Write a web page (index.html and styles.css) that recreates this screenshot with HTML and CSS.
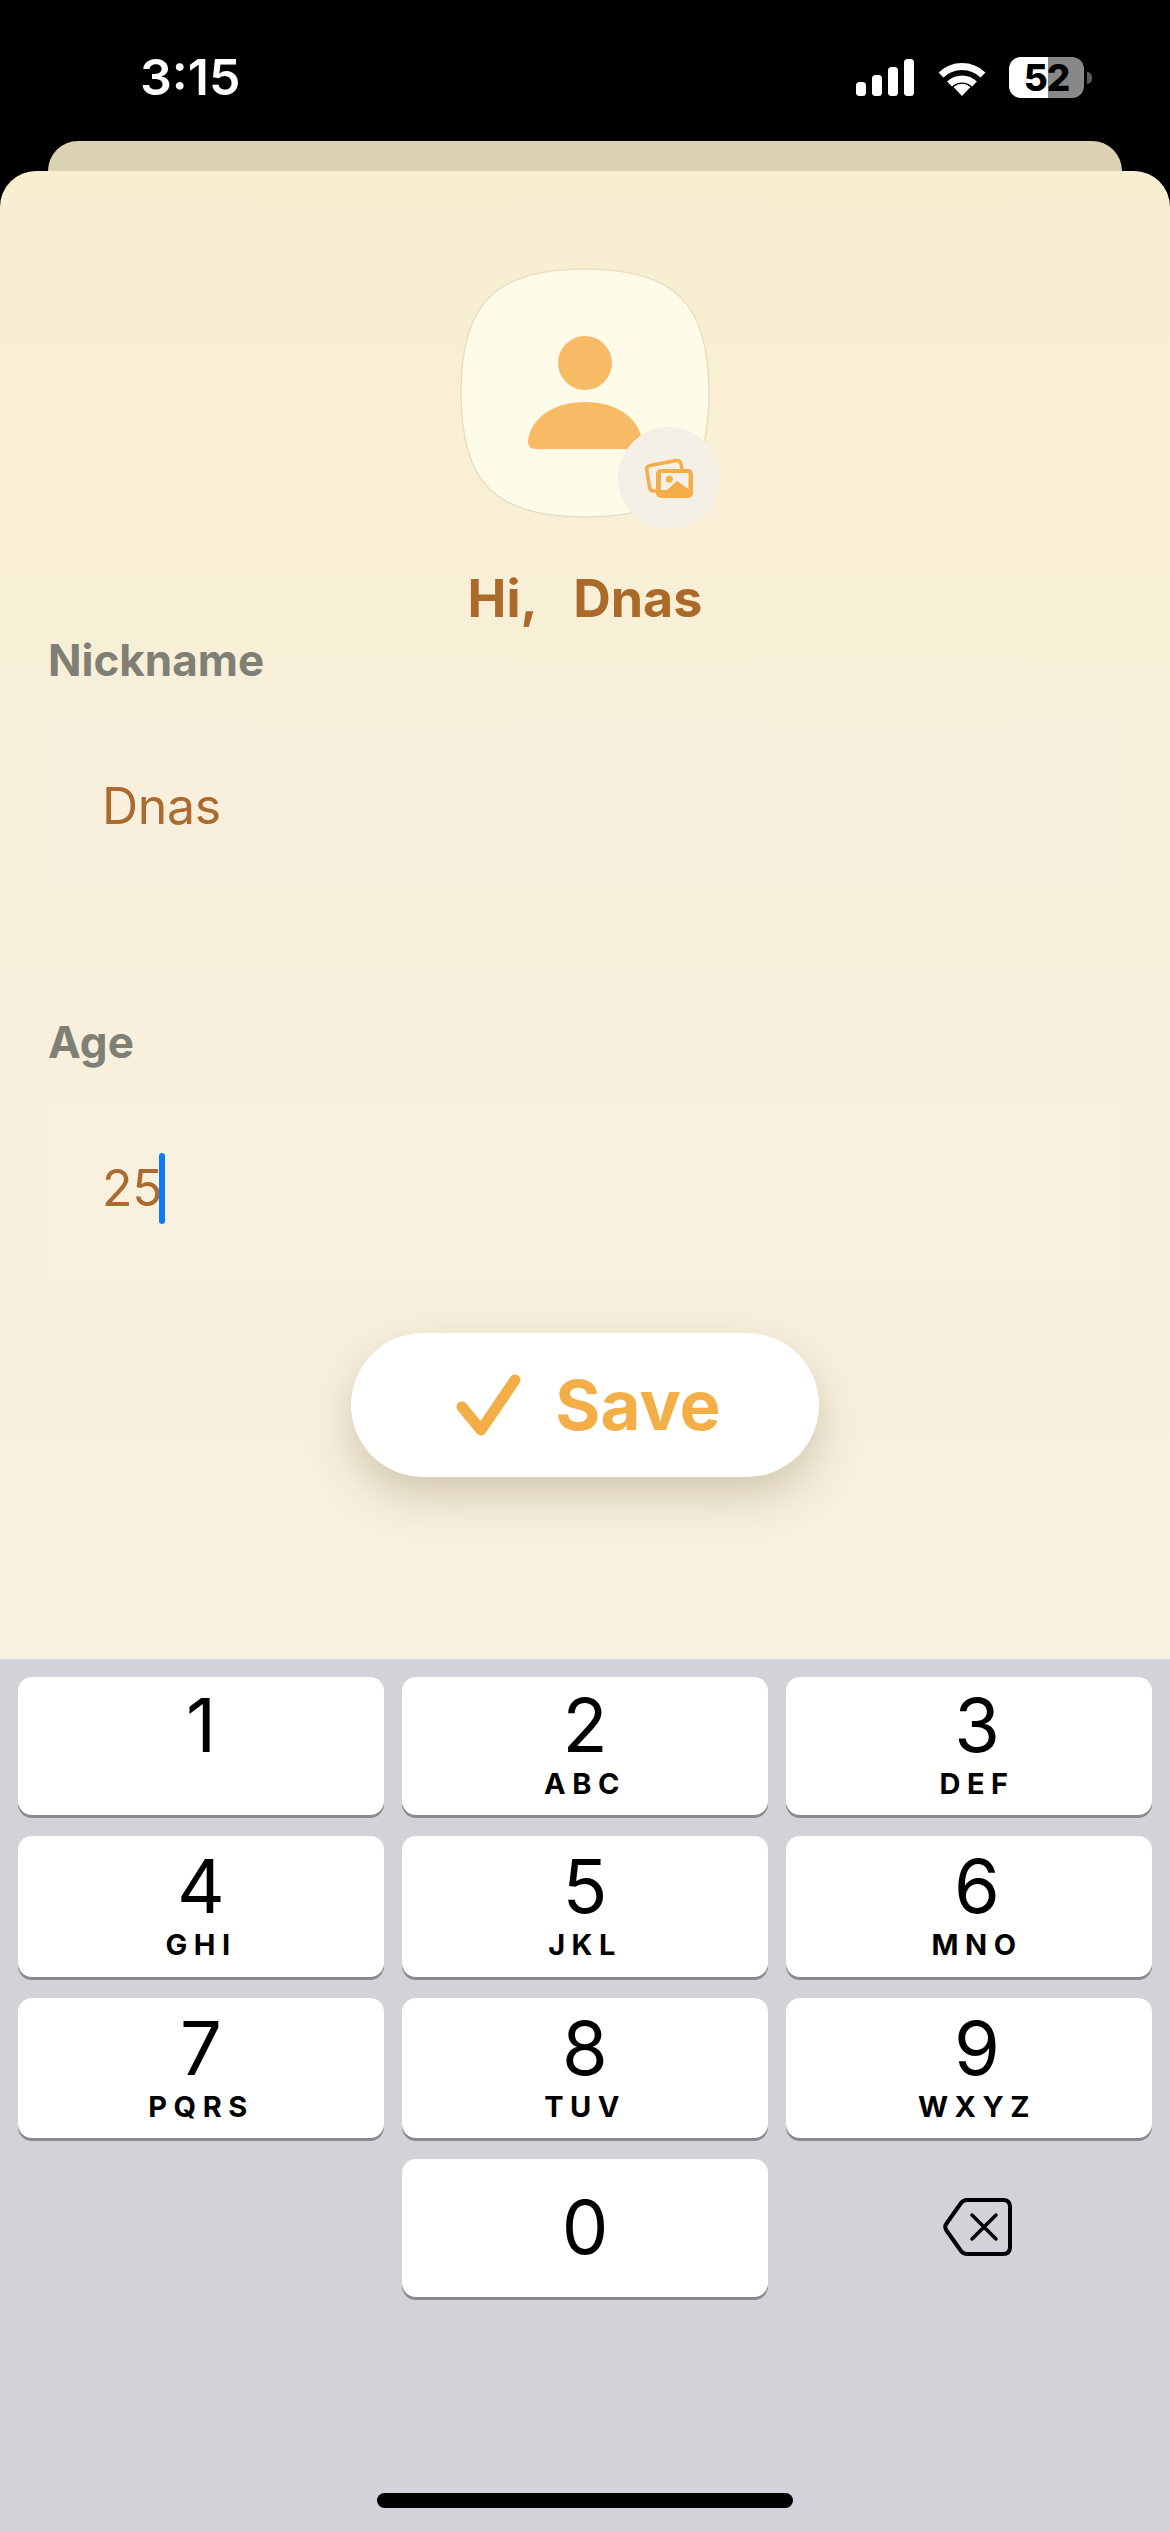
FILE: index.html
```html
<!DOCTYPE html>
<html lang="en">
<head>
  <meta charset="UTF-8">
  <title>Edit Profile</title>
  <link rel="stylesheet" href="styles.css">
</head>
<body>
  <div class="phone">
    <div class="status">
      <span class="time">3:15</span>
      <div class="status-icons">
        <svg class="signal" width="58" height="37" viewBox="0 0 58 37">
          <rect x="0" y="23" width="10" height="14" rx="3.5"/>
          <rect x="16" y="16" width="10" height="21" rx="3.5"/>
          <rect x="32" y="8" width="10" height="29" rx="3.5"/>
          <rect x="48" y="0" width="10" height="37" rx="3.5"/>
        </svg>
        <svg class="wifi" width="50" height="37" viewBox="0 0 50 37">
          <path d="M4 16 A30 30 0 0 1 46 16" fill="none" stroke="#fff" stroke-width="7"/>
          <path d="M12.5 25 A18 18 0 0 1 37.5 25" fill="none" stroke="#fff" stroke-width="7"/>
          <path d="M25 37 L16.5 28 Q25 21.5 33.5 28 Z" fill="#fff"/>
        </svg>
        <div class="battery"><span>52</span></div>
        <div class="battery-nub"></div>
      </div>
    </div>

    <div class="sheet-back"></div>

    <div class="sheet">
      <div class="avatar">
        <svg width="250" height="250" viewBox="0 0 250 250">
          <path d="M125 1 C215 1 249 35 249 125 C249 215 215 249 125 249 C35 249 1 215 1 125 C1 35 35 1 125 1 Z" fill="#fefbe8" stroke="#e9dfc0" stroke-width="1.5"/>
          <circle cx="125" cy="95" r="27" fill="#f7bb66"/>
          <path d="M68 172 C72 148 96 134 125 134 C154 134 178 148 182 172 Q183 181 174 181 H76 Q67 181 68 172 Z" fill="#f7bb66"/>
        </svg>
        <div class="badge">
          <svg width="48" height="41" viewBox="0 0 48 41">
            <path d="M11 33 H9 Q5 33 4.5 29 L1.8 12 Q1.2 8 5 7.5 L31 2.5 Q35 2 36 6 L37 11" fill="none" stroke="#f3ae48" stroke-width="3.5" stroke-linejoin="round"/>
            <rect x="11" y="11" width="37" height="29" rx="5" fill="#f3ae48"/>
            <path d="M16 15 H43.5 V32 H16 Z" fill="#f4f0e6"/>
            <path d="M21 33 L32 23 L43.5 31 V33 Z" fill="#f3ae48"/>
            <circle cx="24.3" cy="21.3" r="3.5" fill="#f3ae48"/>
          </svg>
        </div>
      </div>

      <h1 class="greeting">Hi,   Dnas</h1>

      <label class="field-label">Nickname</label>
      <div class="field field-name">Dnas</div>

      <label class="field-label age-label">Age</label>
      <div class="field field-age">25<span class="caret"></span></div>

      <button class="save-btn">
        <svg width="65" height="62" viewBox="0 0 65 62">
          <path d="M6 33 L25 56 L59 6" fill="none" stroke="#f3ae48" stroke-width="11" stroke-linecap="round" stroke-linejoin="round"/>
        </svg>
        <span>Save</span>
      </button>
    </div>

    <div class="keyboard">
      <div class="keys">
        <div class="key"><span class="num">1</span></div>
        <div class="key"><span class="num">2</span><span class="letters">ABC</span></div>
        <div class="key"><span class="num">3</span><span class="letters">DEF</span></div>
        <div class="key"><span class="num">4</span><span class="letters">GHI</span></div>
        <div class="key"><span class="num">5</span><span class="letters">JKL</span></div>
        <div class="key"><span class="num">6</span><span class="letters">MNO</span></div>
        <div class="key"><span class="num">7</span><span class="letters">PQRS</span></div>
        <div class="key"><span class="num">8</span><span class="letters">TUV</span></div>
        <div class="key"><span class="num">9</span><span class="letters">WXYZ</span></div>
        <div class="key-blank"></div>
        <div class="key key-zero"><span class="num">0</span></div>
        <div class="key-delete">
          <svg width="69" height="58" viewBox="0 0 69 58">
            <path d="M3.5 25.5 L18 5 Q20.5 2 24 2 H60 Q67 2 67 9 V49 Q67 56 60 56 H24 Q20.5 56 18 53 L3.5 32.5 Q1 29 3.5 25.5 Z" fill="none" stroke="#000" stroke-width="4"/>
            <path d="M29 17 L53 41 M53 17 L29 41" fill="none" stroke="#000" stroke-width="3.5" stroke-linecap="round"/>
          </svg>
        </div>
      </div>
      <div class="home-bar"></div>
    </div>
  </div>
</body>
</html>
```

FILE: styles.css
```css
* {
  box-sizing: border-box;
}
body {
  margin: 0;
  font-family: Inter, "Liberation Sans", sans-serif;
}
.phone {
  width: 1170px;
  height: 2532px;
  display: flex;
  flex-direction: column;
  background-color: #000;
  overflow: hidden;
}

/* status bar */
.status {
  height: 141px;
  padding: 47px 78px 0 140px;
  display: flex;
  justify-content: space-between;
  align-items: flex-start;
  color: #fff;
}
.time {
  font-size: 50px;
  font-weight: 600;
  line-height: 60px;
}
.status-icons {
  display: flex;
  align-items: center;
  margin-top: 10px;
}
.signal {
  fill: #fff;
}
.wifi {
  margin-left: 23px;
}
.battery {
  width: 75px;
  height: 41px;
  margin-left: 22px;
  border-radius: 12px;
  background: linear-gradient(90deg, #fff 52%, #888 52%);
  color: #000;
  font-size: 37px;
  font-weight: 800;
  line-height: 41px;
  letter-spacing: -1px;
  text-align: center;
}
.battery-nub {
  width: 5px;
  height: 12px;
  margin-left: 3px;
  border-radius: 0 6px 6px 0;
  background-color: #5a5a5a;
}

/* sheets */
.sheet-back {
  height: 30px;
  margin: 0 48px;
  border-radius: 30px 30px 0 0;
  background-color: #dbd2b4;
}
.sheet {
  height: 1488px;
  padding: 97px 48px 0;
  display: flex;
  flex-direction: column;
  border-radius: 36px 36px 0 0;
  background: linear-gradient(180deg, #f8efd1 0%, #f8efdb 50%, #f8f0e1 100%);
}

/* avatar */
.avatar {
  position: relative;
  width: 250px;
  height: 250px;
  align-self: center;
}
.badge {
  position: absolute;
  left: 158px;
  top: 159px;
  width: 102px;
  height: 102px;
  display: flex;
  align-items: center;
  justify-content: center;
  border-radius: 50%;
  background-color: #f4f0e6;
}
.greeting {
  margin: 51px 0 0;
  color: #ab6a2a;
  font-size: 52px;
  font-weight: 700;
  line-height: 60px;
  text-align: center;
  white-space: pre;
}

/* form */
.field-label {
  display: block;
  margin-top: 5px;
  color: #7f7f76;
  font-size: 44px;
  font-weight: 700;
  line-height: 52px;
}
.age-label {
  margin-top: 128px;
}
.field {
  padding-left: 54px;
  color: #ab6a2e;
  font-size: 50px;
  line-height: 60px;
  letter-spacing: -0.3px;
  display: flex;
  align-items: center;
  background-color: rgba(255, 255, 255, 0.08);
}
.field-name {
  height: 168px;
  margin-top: 34px;
  padding-top: 4px;
}
.field-age {
  height: 176px;
  margin-top: 35px;
  padding-bottom: 6px;
}
.caret {
  width: 6px;
  height: 71px;
  margin-left: -3px;
  border-radius: 3px;
  background-color: #0a7aff;
}
.save-btn {
  width: 468px;
  height: 144px;
  margin-top: 54px;
  padding: 0 0 0 7px;
  align-self: center;
  display: flex;
  align-items: center;
  justify-content: center;
  gap: 34px;
  border: none;
  border-radius: 72px;
  background-color: #fff;
  box-shadow: 0 18px 44px rgba(130, 115, 70, 0.32);
  color: #f3ae48;
  font-family: inherit;
  font-size: 69px;
  font-weight: 700;
}

/* keyboard */
.keyboard {
  flex: 1;
  padding: 18px 18px 24px;
  display: flex;
  flex-direction: column;
  background-color: #d1d3d8;
}
.keys {
  display: grid;
  grid-template-columns: repeat(3, 366px);
  grid-template-rows: 138px 141px 140px 138px;
  column-gap: 18px;
  row-gap: 21px;
}
.key {
  display: flex;
  flex-direction: column;
  align-items: center;
  border-radius: 14px;
  background-color: #fff;
  box-shadow: 0 3px 0 #898a8d;
  color: #000;
}
.key:nth-child(3n) {
  padding-left: 16px;
}
.num {
  margin-top: 11px;
  font-size: 74px;
  line-height: 74px;
}
.key:nth-child(n+4) .num {
  margin-top: 13px;
}
.letters {
  margin-top: 6px;
  font-size: 29px;
  font-weight: 700;
  line-height: 32px;
  letter-spacing: 6.5px;
}
.key-zero {
  justify-content: center;
}
.key:nth-child(n+4).key-zero .num {
  margin-top: 0;
  margin-bottom: 3px;
}
.key-delete {
  display: flex;
  align-items: center;
  justify-content: center;
  padding: 0 0 3px 16px;
}
.home-bar {
  width: 416px;
  height: 15px;
  margin: auto auto 0;
  border-radius: 8px;
  background-color: #000;
}
```
